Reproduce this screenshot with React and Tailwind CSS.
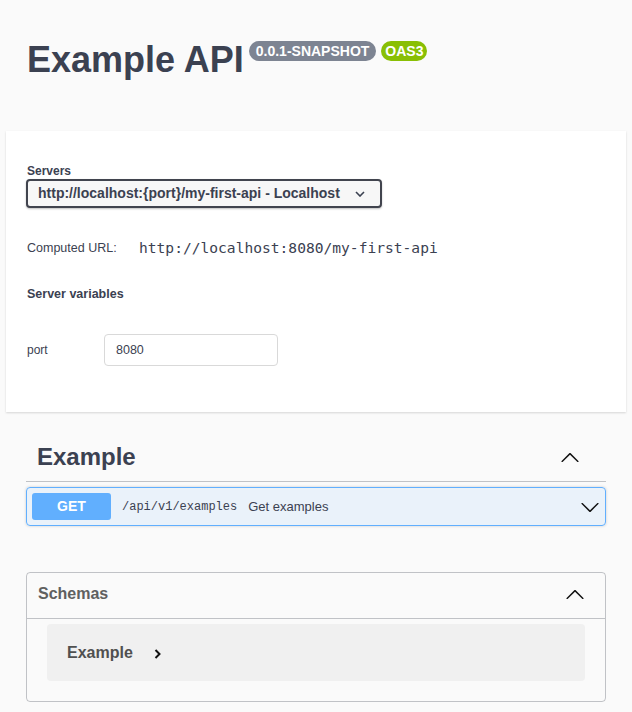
import React from 'react';

const ArrowDown = ({ className }) => (
  <svg viewBox="0 0 20 20" className={className} fill="currentColor">
    <path d="M17.418 6.109c.272-.268.709-.268.979 0s.271.701 0 .969l-7.908 7.83c-.27.268-.707.268-.979 0l-7.908-7.83c-.27-.268-.27-.701 0-.969.271-.268.709-.268.979 0L10 13.25l7.418-7.141z" />
  </svg>
);

const ArrowUp = ({ className }) => (
  <svg viewBox="0 0 20 20" className={className} fill="currentColor">
    <path d="M17.418 14.908c.272.268.709.268.979 0s.271-.701 0-.969l-7.908-7.83c-.27-.268-.707-.268-.979 0l-7.908 7.83c-.27.268-.27.701 0 .969.271.268.709.268.979 0L10 7.767l7.418 7.141z" />
  </svg>
);

export default function App() {
  return (
    <div className="min-h-screen bg-[#fafafa] font-['Liberation_Sans',Arial,sans-serif] text-[#3b4151]">
      {/* Info */}
      <div className="h-[131px] px-[27px] pt-[42px]">
        <div className="flex items-start">
          <h1 className="text-[36px] font-bold leading-[36px] text-[#3b4151]">Example API</h1>
          <span className="ml-[5px] -mt-[1px] h-[20px] rounded-full bg-[#7d8492] px-[7px] text-[14px] font-bold leading-[20px] text-white">
            0.0.1-SNAPSHOT
          </span>
          <span className="ml-[5px] -mt-[1px] h-[20px] rounded-full bg-[#89bf04] px-[4px] text-[14px] font-bold leading-[20px] text-white">
            OAS3
          </span>
        </div>
      </div>

      {/* Servers */}
      <div className="mx-[6px] h-[281px] w-[620px] bg-white px-[21px] shadow-[0_1px_2px_0_rgba(0,0,0,0.15)]">
        <div className="pt-[33px] text-[12px] font-bold leading-[14px]">Servers</div>
        <div className="-ml-px mt-px flex h-[29px] w-[356px] items-center rounded-[4px] border-2 border-[#41444e] bg-[#f7f7f7] pl-[10px] text-[14px] font-bold shadow-[0_1px_2px_0_rgba(0,0,0,0.25)]">
          <span>http://localhost:{'{port}'}/my-first-api - Localhost</span>
          <svg viewBox="0 0 10 6" className="ml-[15px] h-[6px] w-[10px]" fill="none" stroke="#3b4151" strokeWidth="1.6">
            <path d="M1 1l4 4 4-4" />
          </svg>
        </div>

        <div className="mt-[30px] flex h-[20px] items-center">
          <span className="w-[112px] text-[12.5px]">Computed URL:</span>
          <span className="font-['DejaVu_Sans_Mono',monospace] text-[14.6px]">http://localhost:8080/my-first-api</span>
        </div>

        <div className="mt-[28px] h-[16px] text-[12.5px] font-bold leading-[16px]">Server variables</div>

        <div className="mt-[32px] flex items-center">
          <span className="w-[77px] text-[12px]">port</span>
          <div className="flex h-[32px] w-[174px] items-center rounded-[4px] border border-[#d9d9d9] bg-white pl-[11px] text-[12.5px]">
            8080
          </div>
        </div>
      </div>

      {/* Tag */}
      <div className="mx-[26px] mt-[21px]">
        <div className="flex h-[49px] items-center justify-between border-b border-[rgba(59,65,81,0.3)] pl-[11px]">
          <h3 className="text-[24px] font-bold">Example</h3>
          <ArrowUp className="mr-[26px] h-[20px] w-[20px] text-[#111]" />
        </div>

        <div className="mt-[5px] flex h-[39px] items-center rounded-[4px] border border-[#61affe] bg-[rgba(97,175,254,0.1)] px-[5px] shadow-[0_0_3px_rgba(0,0,0,0.19)]">
          <span className="flex h-[27px] w-[79px] items-center justify-center rounded-[3px] bg-[#61affe] text-[14px] font-bold text-white">
            GET
          </span>
          <span className="ml-[11px] font-['Liberation_Mono',monospace] text-[12px]">/api/v1/examples</span>
          <span className="ml-[11px] flex-1 text-[13px]">Get examples</span>
          <ArrowDown className="h-[20px] w-[20px] text-[#111]" />
        </div>
      </div>

      {/* Schemas */}
      <div className="mx-[26px] mt-[46px] h-[130px] rounded-[4px] border border-[rgba(59,65,81,0.3)]">
        <div className="flex h-[46px] items-center justify-between border-b border-[rgba(59,65,81,0.3)] pb-[3px] pl-[11px]">
          <h4 className="text-[16px] font-bold text-[#606060]">Schemas</h4>
          <ArrowUp className="mr-[20px] h-[20px] w-[20px] text-[#111]" />
        </div>
        <div className="mx-[20px] mt-[5px] flex h-[57px] items-center rounded-[4px] bg-[#f0f0f0] pl-[20px]">
          <span className="text-[16px] font-bold text-[#505050]">Example</span>
          <svg viewBox="0 0 7 10" className="ml-[21px] mt-[3px] h-[10px] w-[7px]" fill="none" stroke="#111" strokeWidth="2">
            <path d="M1.5 1l4 4-4 4" />
          </svg>
        </div>
      </div>
    </div>
  );
}
